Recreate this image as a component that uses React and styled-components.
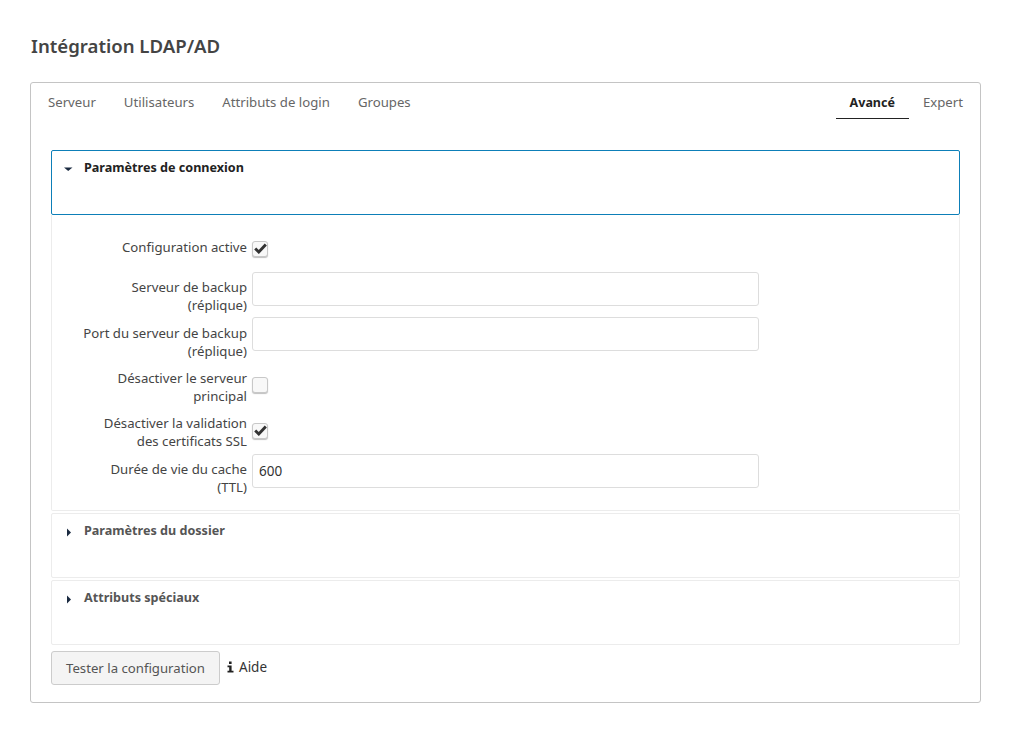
import React from "react";
import styled, { createGlobalStyle } from "styled-components";

const GlobalStyle = createGlobalStyle`
  html, body {
    margin: 0;
    background: #fff;
    font-family: "Noto Sans", "Open Sans", sans-serif;
    font-size: 13.2px;
    color: #333;
  }
`;

const Page = styled.div`
  padding: 34px 30px 30px;
  width: 951px;
  box-sizing: content-box;
`;

const Title = styled.h1`
  margin: 0 0 25px;
  padding-left: 1px;
  font-size: 18.6px;
  line-height: 23px;
  font-weight: 600;
  color: #444;
`;

const Card = styled.div`
  box-sizing: border-box;
  height: 621px;
  border: 1px solid #c4c4c4;
  border-radius: 3px;
  padding: 0 20px;
`;

const Tabs = styled.div`
  display: flex;
  height: 37px;
  margin: 0 -17px 30px;
  justify-content: space-between;
`;

const TabGroup = styled.div`
  display: flex;
  align-items: flex-start;
`;

const Tab = styled.div`
  box-sizing: border-box;
  height: 36px;
  padding: ${(p) => (p.$active ? 11 : 10)}px 14px 0;
  line-height: 18px;
  color: ${(p) => (p.$active ? "#222" : "#666")};
  font-weight: ${(p) => (p.$active ? 700 : 400)};
  font-size: ${(p) => (p.$active ? "12.5px" : "13.2px")};
  border-bottom: ${(p) => (p.$active ? "1px solid #222" : "none")};
`;

const Section = styled.div`
  box-sizing: border-box;
  height: 65px;
  margin-bottom: ${(p) => (p.$open ? 0 : 2)}px;
  padding: 8px 12px;
  display: flex;
  align-items: flex-start;
  gap: 11px;
  border: 1px solid ${(p) => (p.$open ? "#0d7fb8" : "#ececec")};
  border-radius: 2px;
  font-weight: 700;
  font-size: 12.6px;
  line-height: 18px;
  color: ${(p) => (p.$open ? "#222" : "#555")};
`;

const Arrow = styled.svg`
  width: 9px;
  height: 9px;
  margin-top: 6px;
  flex: none;
`;

const Body = styled.div`
  box-sizing: border-box;
  height: 296px;
  margin-bottom: 2px;
  padding-top: 15px;
  border: 1px solid #ececec;
  border-top: none;
  border-radius: 0 0 2px 2px;
`;

const Row = styled.div`
  display: flex;
  align-items: flex-start;
  gap: 5px;
  height: 45.4px;
`;

const FirstRow = styled(Row)`
  align-items: center;
  height: 34px;
  margin-bottom: 8px;
`;

const Label = styled.label`
  box-sizing: border-box;
  width: 195px;
  flex: none;
  padding-top: 6.2px;
  text-align: right;
  line-height: 18px;
  color: #444;
`;

const FirstLabel = styled(Label)`
  padding-top: 0;
`;

const Input = styled.input`
  box-sizing: border-box;
  width: 507px;
  height: 34px;
  padding: 0 6px;
  border: 1px solid #ddd;
  border-radius: 3px;
  background: #fff;
  font: inherit;
  font-size: 13.5px;
  color: #333;
  outline: none;
`;

const Box = styled.span`
  box-sizing: border-box;
  width: 16px;
  height: 16px;
  margin-top: ${(p) => p.$top || 0}px;
  display: flex;
  align-items: center;
  justify-content: center;
  border: 1px solid #c8c8c8;
  border-radius: 3px;
  background: #f8f8f8;
  box-shadow: 0 1px 1px rgba(0, 0, 0, 0.25);
`;

const Footer = styled.div`
  display: flex;
  align-items: flex-start;
  margin-top: 6px;
  gap: 7px;
`;

const Button = styled.button`
  box-sizing: border-box;
  width: 169px;
  height: 34px;
  padding: 0;
  border: 1px solid #ccc;
  border-radius: 3px;
  background: #f4f4f4;
  font: inherit;
  color: #555;
`;

const Help = styled.a`
  display: flex;
  align-items: center;
  gap: 5px;
  margin-top: 7px;
  line-height: 18px;
  font-size: 13.5px;
  color: #333;
`;

const Check = ({ checked, top }) => (
  <Box $top={top}>
    {checked && (
      <svg width="13" height="11" viewBox="0 0 13 11">
        <path d="M1.2 5.5 L4.8 9 L11.8 1.6" fill="none" stroke="#333" strokeWidth="2.9" />
      </svg>
    )}
  </Box>
);

const Caret = ({ open }) => (
  <Arrow viewBox="0 0 9 9">
    {open ? <path d="M0 2.5 H8.5 L4.2 6 Z" fill="#1a2a40" /> : <path d="M3 0.5 L7 4.5 L3 8.5 Z" fill="#1a2a40" />}
  </Arrow>
);

const InfoIcon = () => (
  <svg width="7" height="12" viewBox="0 0 7 12">
    <path d="M2 0.5 H4.6 V3 H2 Z M0.5 4.5 H4.6 V9.8 H6.5 V11.5 H0.5 V9.8 H2.2 V6.2 H0.5 Z" fill="#222" />
  </svg>
);

export default function App() {
  return (
    <Page>
      <GlobalStyle />
      <Title>Intégration LDAP/AD</Title>
      <Card>
        <Tabs>
          <TabGroup>
            <Tab>Serveur</Tab>
            <Tab>Utilisateurs</Tab>
            <Tab>Attributs de login</Tab>
            <Tab>Groupes</Tab>
          </TabGroup>
          <TabGroup>
            <Tab $active>Avancé</Tab>
            <Tab>Expert</Tab>
          </TabGroup>
        </Tabs>

        <Section $open>
          <Caret open />
          Paramètres de connexion
        </Section>
        <Body>
          <FirstRow>
            <FirstLabel>Configuration active</FirstLabel>
            <Check checked top={3} />
          </FirstRow>
          <Row>
            <Label>Serveur de backup<br />(réplique)</Label>
            <Input />
          </Row>
          <Row>
            <Label>Port du serveur de backup<br />(réplique)</Label>
            <Input />
          </Row>
          <Row>
            <Label>Désactiver le serveur<br />principal</Label>
            <Check top={14.4} />
          </Row>
          <Row>
            <Label>Désactiver la validation<br />des certificats SSL</Label>
            <Check checked top={14.4} />
          </Row>
          <Row>
            <Label>Durée de vie du cache<br />(TTL)</Label>
            <Input defaultValue="600" />
          </Row>
        </Body>

        <Section>
          <Caret />
          Paramètres du dossier
        </Section>
        <Section>
          <Caret />
          Attributs spéciaux
        </Section>

        <Footer>
          <Button>Tester la configuration</Button>
          <Help>
            <InfoIcon />
            Aide
          </Help>
        </Footer>
      </Card>
    </Page>
  );
}
